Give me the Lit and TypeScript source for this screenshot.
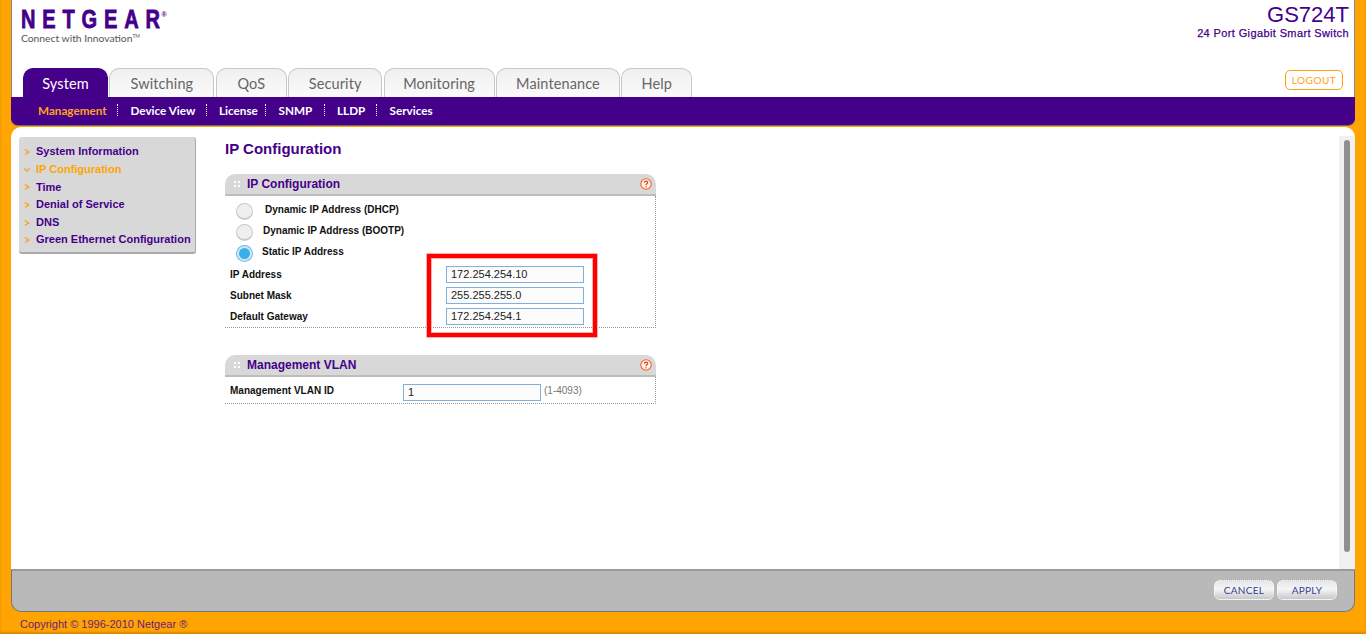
import { customElement } from "lit/decorators.js";
import { css, html, LitElement } from "lit";

const TABS = [
    { label: "System", width: 85 },
    { label: "Switching", width: 105 },
    { label: "QoS", width: 71 },
    { label: "Security", width: 94 },
    { label: "Monitoring", width: 111 },
    { label: "Maintenance", width: 124 },
    { label: "Help", width: 71 },
];
const SUBNAV = [
    { label: "Management", width: 69 },
    { label: "Device View", width: 65 },
    { label: "License", width: 36 },
    { label: "SNMP", width: 35 },
    { label: "LLDP", width: 29 },
    { label: "Services", width: 43 },
];
const MENU = ["System Information", "IP Configuration", "Time", "Denial of Service", "DNS", "Green Ethernet Configuration"];

const helpIcon = html`
    <svg class="help" width="12" height="12" viewBox="0 0 12 12">
        <circle cx="6" cy="6" r="5.2" fill="#fff3ea" stroke="#f2632c" stroke-width="1.1"></circle>
        <path d="M4.4 4.7c0-2.1 3.3-2.1 3.3-.1 0 1.2-1.7 1.300-1.700 2.700" fill="none" stroke="#d8421c" stroke-width="1.200"></path>
        <rect x="5.400" y="8.200" width="1.200" height="1.200" fill="#d8421c"></rect>
    </svg>
`;

const grip = html`
    <svg class="grip" width="6" height="6" viewBox="0 0 6 6">
        <rect width="2" height="2" fill="#fff"></rect>
        <rect x="4" width="2" height="2" fill="#fff"></rect>
        <rect y="4" width="2" height="2" fill="#fff"></rect>
        <rect x="4" y="4" width="2" height="2" fill="#fff"></rect>
    </svg>
`;

@customElement("app-root")
class AppRoot extends LitElement {
    static get styles() {
        return css`
            :host {
                display: block;
                width: 1366px;
                height: 634px;
                overflow: hidden;
                background: #ffa400;
                box-shadow: inset 0 -2px 2px rgba(150, 90, 0, 0.35);
                font-family: "Liberation Sans", Arial, sans-serif;
            }

            .frame {
                display: flex;
                flex-direction: column;
                width: 1344px;
                height: 612px;
                margin-left: 11px;
            }

            .header {
                display: flex;
                flex-direction: column;
                height: 97px;
                flex: none;
                box-sizing: border-box;
                background: #fff;
                border-left: 1px solid #8a8a8a;
                border-right: 1px solid #8a8a8a;
            }

            .brand {
                display: flex;
                justify-content: space-between;
                height: 68px;
                padding: 0 5px 0 9px;
            }

            .logo {
                padding-top: 5px;
            }

            .wordmark {
                display: flex;
                align-items: flex-start;
                height: 26px;
                color: #45008a;
                font-size: 26px;
                line-height: 29px;
                font-weight: 700;
            }

            /* the logo letters are narrower and further apart than the font's */
            .letters {
                margin-right: -49px;
                letter-spacing: 8.9px;
                transform: scaleX(0.77);
                transform-origin: left;
                -webkit-text-stroke: 0.8px #45008a;
            }

            .wordmark sup {
                margin: 6px 0 0 0;
                font-size: 7px;
                line-height: 8px;
            }

            .tagline {
                color: #555;
                font-family: Lato, sans-serif;
                font-size: 10.3px;
                line-height: 14px;
            }

            .tagline sup {
                font-size: 5px;
                line-height: 0;
                vertical-align: 4px;
            }

            .model {
                display: flex;
                flex-direction: column;
                align-items: flex-end;
                color: #45008a;
            }

            .model strong {
                font-size: 22px;
                line-height: 25px;
                margin-top: 2px;
                font-weight: 400;
            }

            .model span {
                font-size: 11px;
                line-height: 13px;
                letter-spacing: 0.38px;
                -webkit-text-stroke: 0.25px #45008a;
            }

            .tabbar {
                display: flex;
                align-items: flex-end;
                justify-content: space-between;
                height: 29px;
                padding: 0 11px 0 11px;
            }

            .tabs {
                display: flex;
                gap: 1.4px;
            }

            .tab {
                display: flex;
                align-items: center;
                justify-content: center;
                box-sizing: border-box;
                height: 29px;
                border: 1px solid #c8c8c8;
                border-bottom: 0;
                border-radius: 10px 10px 0 0;
                background: linear-gradient(#f0f0f0, #fafafa);
                color: #666;
                font-family: Lato, sans-serif;
                font-size: 14.5px;
                letter-spacing: 0.1px;
            }

            .tab.active {
                border-color: #45008a;
                background: #45008a;
                color: #fff;
            }

            .logout {
                box-sizing: border-box;
                width: 58px;
                height: 20px;
                margin-bottom: 7px;
                border: 1px solid #ff9f10;
                border-radius: 5px;
                background: #fff;
                color: #ff9f10;
                font-family: Lato, sans-serif;
                font-size: 10px;
                line-height: 19px;
                letter-spacing: 0.5px;
                text-align: center;
            }

            .subnav {
                display: flex;
                align-items: center;
                flex: none;
                height: 29px;
                box-sizing: border-box;
                padding: 0 0 3px 27px;
                border-bottom: 1px solid #6e6e6e;
                border-radius: 0 0 7px 7px;
                background: #45008a;
                color: #fff;
                font-family: Lato, sans-serif;
                font-size: 11.7px;
                font-weight: 700;
            }

            .subnav span {
                display: block;
                box-sizing: content-box;
                padding-right: 10px;
                margin-right: 12.5px;
                line-height: 12px;
                white-space: nowrap;
                border-right: 1px dotted #fff;
            }

            .subnav span:last-child {
                border-right: 0;
            }

            .subnav .current {
                color: #ffa41e;
            }

            .content {
                display: flex;
                flex: 1;
                min-height: 0;
                margin-top: 1px;
                border-radius: 10px 10px 0 0;
                background: #fff;
            }

            .menu {
                flex: none;
                align-self: flex-start;
                box-sizing: border-box;
                width: 177px;
                height: 117px;
                margin: 10px 0 0 8px;
                padding: 6.4px 0 0 5px;
                border-right: 1px solid #aaa;
                border-bottom: 2px solid #aaa;
                border-radius: 3px;
                background: #d8d8d8;
                color: #45008a;
                font-size: 11px;
                font-weight: 700;
                line-height: 17.6px;
            }

            .menu div {
                display: flex;
                align-items: center;
                gap: 6px;
                white-space: nowrap;
            }

            .menu .current {
                color: #ffa400;
            }

            .menu svg {
                flex: none;
            }

            .main {
                flex: 1;
                padding: 13px 0 0 29px;
            }

            h1 {
                margin: 0 0 16px;
                color: #45008a;
                font-size: 15px;
                line-height: 18px;
                font-weight: 700;
            }

            .panel {
                position: relative;
                width: 431px;
                margin-bottom: 27px;
                color: #111;
                font-size: 10px;
                font-weight: 700;
            }

            .panel-head {
                display: flex;
                align-items: center;
                box-sizing: border-box;
                height: 22px;
                padding: 0 4px 0 9px;
                border-bottom: 2px solid #bdbdbd;
                border-radius: 10px 10px 0 0;
                background: #d8d8d8;
                color: #45008a;
                font-size: 12px;
            }

            .grip {
                margin-right: 7px;
            }

            .help {
                margin-left: auto;
            }

            .panel-body {
                display: flex;
                flex-direction: column;
                box-sizing: border-box;
                border-right: 1px dotted #999;
                border-bottom: 1px dotted #999;
            }

            .panel-body.ip {
                height: 132px;
                padding-top: 4px;
            }

            .panel-body.vlan {
                height: 27px;
                padding-top: 7px;
            }

            .radios {
                margin-bottom: 3px;
            }

            .radio-row {
                display: flex;
                align-items: center;
                height: 21px;
                padding-left: 11px;
            }

            .radio {
                flex: none;
                box-sizing: border-box;
                width: 17px;
                height: 17px;
                margin-top: 2px;
                border: 1px solid #c9c9c9;
                border-bottom-width: 2px;
                border-radius: 50%;
                background: #eeeff1;
            }

            .radio.on {
                border: 2px solid #cfe7f6;
                background: #3aaee8;
                box-shadow: 0 0 0 1px #6fb9e4;
                width: 15px;
                height: 15px;
                margin: 2px 1px 0;
            }

            .radio-row label {
                margin-top: -3px;
            }

            .l1 {
                margin-left: 12px;
            }

            .l2 {
                margin-left: 10px;
            }

            .l3 {
                margin-left: 9px;
            }

            .field {
                display: flex;
                align-items: flex-start;
                height: 21px;
                padding-left: 5px;
                flex: none;
            }

            .field label {
                line-height: 18px;
            }

            .ip .field label {
                width: 216px;
            }

            .vlan .field label {
                width: 173px;
                line-height: 14px;
            }

            .value {
                flex: none;
                box-sizing: border-box;
                width: 138px;
                height: 17px;
                padding-left: 4px;
                border: 1px solid #7fb0e0;
                background: #fcfcfc;
                color: #222;
                font-size: 11px;
                font-weight: 400;
                line-height: 15px;
            }

            .range {
                margin-left: 3px;
                color: #777;
                font-weight: 400;
                line-height: 14px;
            }

            .highlight {
                position: absolute;
                left: 202px;
                top: 80px;
                width: 170px;
                height: 83px;
                box-sizing: border-box;
                border: 4px solid #f00;
                outline: 1px solid #ffb0b0;
                box-shadow: inset 0 0 0 1px #ffb0b0;
            }

            .scroll {
                flex: none;
                display: flex;
                justify-content: center;
                box-sizing: border-box;
                width: 16px;
                height: 433px;
                margin-top: 9px;
                padding-top: 4px;
                background: #f1f1f1;
            }

            .thumb {
                width: 6px;
                height: 412px;
                border-radius: 3px;
                background: #8f8f8f;
            }

            .actions {
                display: flex;
                justify-content: flex-end;
                gap: 3px;
                flex: none;
                box-sizing: border-box;
                height: 43px;
                padding: 9px 17px 0 0;
                border-top: 2px solid #9a9a9a;
                border-left: 1px solid #777;
                border-right: 1px solid #777;
                border-bottom: 1px solid #777;
                border-radius: 0 0 10px 10px;
                background: #b9b9b9;
            }

            .btn {
                box-sizing: border-box;
                width: 60px;
                height: 20px;
                border: 1px dotted #fff;
                border-radius: 6px;
                background: linear-gradient(#e4e6ea, #f5f5f6 45%, #c8c8cc);
                color: #34408f;
                font-family: Lato, sans-serif;
                font-size: 10px;
                line-height: 19px;
                letter-spacing: 0.3px;
                text-align: center;
            }

            .copyright {
                padding: 5px 0 0 20px;
                color: #6e1a78;
                font-size: 11px;
                line-height: 14px;
            }
        `;
    }

    private bullet(open: boolean) {
        return html`
            <svg width="6" height="6" viewBox="0 0 6 6" fill="none" stroke="#ff9a00" stroke-width="1.500" stroke-dasharray="1.500 0.600">
                <path d=${open ? "M0.500 1.500 3 4.500 5.500 1.500" : "M1 0.500 4.500 3 1 5.500"}></path>
            </svg>
        `;
    }

    protected render() {
        return html`
            <div class="frame">
                <header class="header">
                    <div class="brand">
                        <div class="logo">
                            <div class="wordmark"><span class="letters">NETGEAR</span><sup>®</sup></div>
                            <div class="tagline">Connect with Innovation<sup>TM</sup></div>
                        </div>
                        <div class="model">
                            <strong>GS724T</strong>
                            <span>24 Port Gigabit Smart Switch</span>
                        </div>
                    </div>
                    <div class="tabbar">
                        <div class="tabs">
                            ${TABS.map(
                                (t, i) => html`<div class="tab ${i === 0 ? "active" : ""}" style="width:${t.width}px">${t.label}</div>`,
                            )}
                        </div>
                        <div class="logout">LOGOUT</div>
                    </div>
                </header>
                <nav class="subnav">
                    ${SUBNAV.map(
                        (s, i) => html`<span class=${i === 0 ? "current" : ""} style="width:${s.width}px">${s.label}</span>`,
                    )}
                </nav>
                <div class="content">
                    <aside class="menu">
                        ${MENU.map(
                            (m, i) => html`<div class=${i === 1 ? "current" : ""}>${this.bullet(i === 1)}${m}</div>`,
                        )}
                    </aside>
                    <main class="main">
                        <h1>IP Configuration</h1>
                        <section class="panel">
                            <div class="panel-head">${grip}IP Configuration${helpIcon}</div>
                            <div class="panel-body ip">
                                <div class="radios">
                                    <div class="radio-row"><div class="radio"></div><label class="l1">Dynamic IP Address (DHCP)</label></div>
                                    <div class="radio-row"><div class="radio"></div><label class="l2">Dynamic IP Address (BOOTP)</label></div>
                                    <div class="radio-row"><div class="radio on"></div><label class="l3">Static IP Address</label></div>
                                </div>
                                <div class="field"><label>IP Address</label><div class="value">172.254.254.10</div></div>
                                <div class="field"><label>Subnet Mask</label><div class="value">255.255.255.0</div></div>
                                <div class="field"><label>Default Gateway</label><div class="value">172.254.254.1</div></div>
                            </div>
                            <div class="highlight"></div>
                        </section>
                        <section class="panel">
                            <div class="panel-head">${grip}Management VLAN${helpIcon}</div>
                            <div class="panel-body vlan">
                                <div class="field">
                                    <label>Management VLAN ID</label>
                                    <div class="value">1</div>
                                    <span class="range">(1-4093)</span>
                                </div>
                            </div>
                        </section>
                    </main>
                    <div class="scroll"><div class="thumb"></div></div>
                </div>
                <footer class="actions">
                    <div class="btn">CANCEL</div>
                    <div class="btn">APPLY</div>
                </footer>
            </div>
            <div class="copyright">Copyright © 1996-2010 Netgear ®</div>
        `;
    }
}

export default AppRoot;
